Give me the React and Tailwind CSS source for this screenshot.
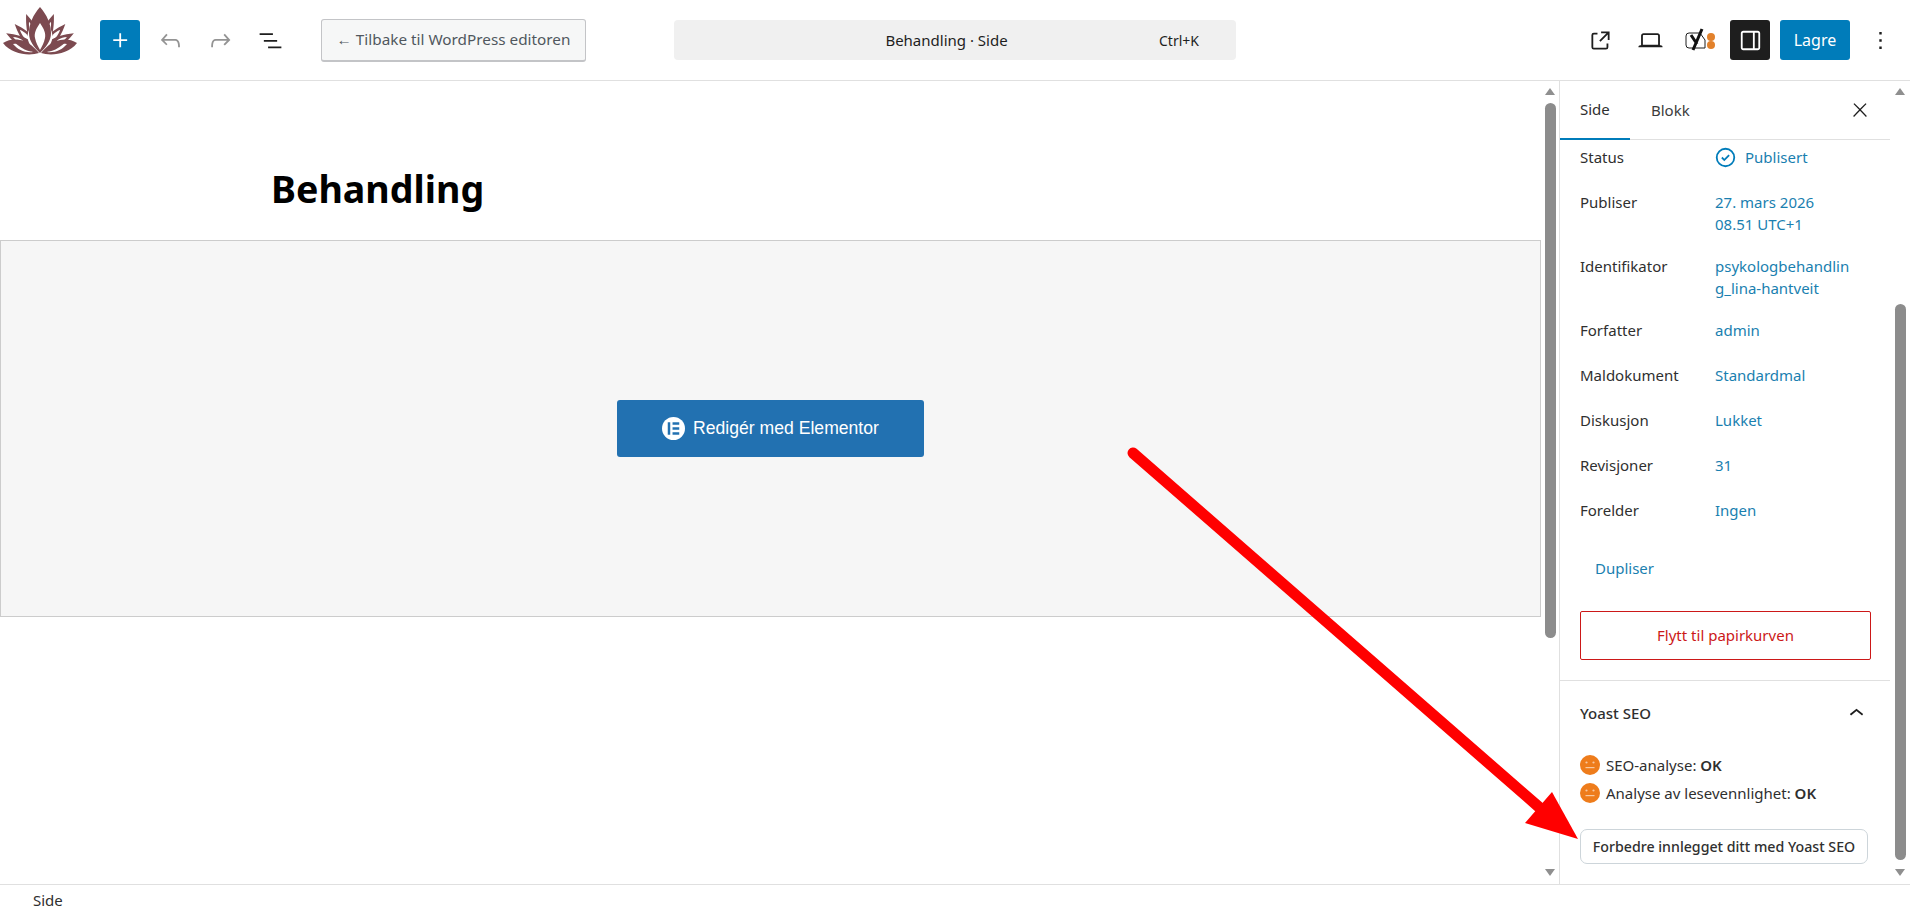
import React from "react";

const WpIcon = ({ d, className = "w-[29px] h-[29px]" }) => (
  <svg viewBox="0 0 24 24" className={`fill-current ${className}`}>
    <path d={d} fillRule="evenodd" />
  </svg>
);

const icons = {
  plus: "M11 12.5V17.5H12.5V12.5H17.5V11H12.5V6H11V11H6V12.5H11Z",
  undo: "M18.3 11.7c-.6-.6-1.4-.9-2.3-.9H6.7l2.9-3.3-1.1-1-4.5 5L8.5 16l1-1-2.7-2.7H16c.5 0 .9.2 1.3.5 1 1 1 3.4 1 4.5v.3h1.5v-.2c0-1.5 0-4.3-1.5-5.7z",
  redo: "M15.6 6.5l-1.1 1 2.9 3.3H8c-.9 0-1.7.3-2.3.9-1.4 1.5-1.4 4.2-1.4 5.6v.2h1.5v-.3c0-1.1 0-3.5 1-4.5.3-.3.7-.5 1.3-.5h9.2L14.5 15l1.1 1.1 4.6-4.6-4.6-5z",
  list: "M3 6h11v1.5H3V6Zm3.5 5.5h11V13h-11v-1.5ZM21 17H10v1.5h11V17Z",
  external: "M19.5 4.5h-7V6h4.44l-5.97 5.97 1.06 1.06L18 7.06v4.44h1.5v-7Zm-13 1a2 2 0 0 0-2 2v10a2 2 0 0 0 2 2h10a2 2 0 0 0 2-2v-3H17v3a.5.5 0 0 1-.5.5h-10a.5.5 0 0 1-.5-.5v-10a.5.5 0 0 1 .5-.5h3V5.5h-3Z",
  laptop: "M20.5 16h-.7V8c0-1.1-.9-2-2-2H6.2c-1.1 0-2 .9-2 2v8h-.7c-.8 0-1.5.7-1.5 1.5h20c0-.8-.7-1.5-1.5-1.5zM5.7 8c0-.3.2-.5.5-.5h11.6c.3 0 .5.2.5.5v7.6H5.7V8z",
  panel: "M18 4H6c-1.1 0-2 .9-2 2v12c0 1.1.9 2 2 2h12c1.1 0 2-.9 2-2V6c0-1.1-.9-2-2-2zm-4 14.5H6c-.3 0-.5-.2-.5-.5V6c0-.3.2-.5.5-.5h8v13zm4.5-.5c0 .3-.2.5-.5.5h-2.5v-13H18c.3 0 .5.2.5.5v12z",
  dots: "M13 19h-2v-2h2v2zm0-6h-2v-2h2v2zm0-6h-2V5h2v2z",
  close: "M13 11.8l6.1-6.3-1-1-6.1 6.2-6.1-6.2-1 1 6.1 6.3-6.5 6.7 1 1 6.5-6.6 6.5 6.6 1-1z",
  chevron: "M6.5 12.4L12 8l5.5 4.4-.9 1.2L12 10l-4.5 3.6-1-1.2z",
  published: "M12 18.5a6.5 6.5 0 1 1 0-13 6.5 6.5 0 0 1 0 13ZM4 12a8 8 0 1 1 16 0 8 8 0 0 1-16 0Zm11.53-1.47-1.06-1.06L11 12.94l-1.47-1.47-1.06 1.06L11 15.06l4.53-4.53Z",
};

function Petal({ angle, scale }) {
  return (
    <g transform={`rotate(${angle} 40 52) translate(40 52) scale(${scale}) translate(-40 -52)`}>
      <path
        fillRule="evenodd"
        d="M40 50 C33 42 31 30 40 8 C49 30 47 42 40 50Z M40 34 C37 29 37 24 40 17 C43 24 43 29 40 34Z"
      />
    </g>
  );
}

function Logo() {
  return (
    <svg viewBox="0 0 80 60" className="w-[80px] h-[60px] fill-[#7c4a50] shrink-0 self-start">
      <Petal angle={-61} scale={0.88} />
      <Petal angle={61} scale={0.88} />
      <Petal angle={-42} scale={0.86} />
      <Petal angle={42} scale={0.86} />
      <Petal angle={-20} scale={0.92} />
      <Petal angle={20} scale={0.92} />
      <path
        fill="#fff"
        d="M40 15 C50 24 54 34 52 40 C50 47 45 51 40 55 C35 51 30 47 28 40 C26 34 30 24 40 15Z"
      />
      <path
        fillRule="evenodd"
        d="M40 7 C47 15 51 24 51 33 C51 41 46 47 40 53 C34 47 29 41 29 33 C29 24 33 15 40 7Z M40 23 C36 29 34 33 35 38 C36 43 38 46 40 50 C42 46 44 43 45 38 C46 33 44 29 40 23Z"
      />
      <path
        fillRule="evenodd"
        d="M3 43 C12 37 24 39 31 45 C34 48 37 50 39 53 C30 56 12 55 3 43Z M13 44 C20 42 27 46 33 52 C25 53 18 50 13 44Z"
      />
      <path
        fillRule="evenodd"
        d="M77 43 C68 37 56 39 49 45 C46 48 43 50 41 53 C50 56 68 55 77 43Z M67 44 C60 42 53 46 47 52 C55 53 62 50 67 44Z"
      />
    </svg>
  );
}

function YoastIcon() {
  return (
    <svg viewBox="0 0 32 28" className="w-[32px] h-[28px]">
      <path d="M5 7 H16 L21 14 V22 H5 Q2 22 2 19 V10 Q2 7 5 7Z" fill="none" stroke="#1e1e1e" strokeWidth="1" />
      <path d="M7 9 L13 18 M18 3 L9 24" fill="none" stroke="#111" strokeWidth="3" />
      <circle cx="27" cy="11" r="4" fill="#e2812b" />
      <circle cx="27" cy="19" r="4" fill="#e2812b" />
    </svg>
  );
}

function Face() {
  return (
    <svg viewBox="0 0 20 20" className="w-[20px] h-[20px] shrink-0">
      <circle cx="10" cy="10" r="10" fill="#ee7c1b" />
      <circle cx="6.5" cy="7.5" r="1.1" fill="#f9c9a0" />
      <circle cx="13.5" cy="7.5" r="1.1" fill="#f9c9a0" />
      <rect x="5.5" y="12" width="9" height="1.2" fill="#f9c9a0" />
    </svg>
  );
}

function ElementorIcon() {
  return (
    <svg viewBox="0 0 24 24" className="w-[23px] h-[23px]">
      <circle cx="12" cy="12" r="12" fill="#fff" />
      <rect x="6" y="5.5" width="2.6" height="13" fill="#2271b1" />
      <rect x="11" y="5.5" width="7" height="2.6" fill="#2271b1" />
      <rect x="11" y="10.7" width="7" height="2.6" fill="#2271b1" />
      <rect x="11" y="15.9" width="7" height="2.6" fill="#2271b1" />
    </svg>
  );
}

function Scrollbar({ thumbTop, thumbHeight, className = "" }) {
  return (
    <div className={`flex flex-col items-center shrink-0 relative h-full ${className}`}>
      <svg viewBox="0 0 10 7" className="w-[10px] h-[7px] fill-[#8f8f8f] absolute top-[7px]">
        <path d="M5 0 L10 7 H0Z" />
      </svg>
      <div
        className="w-[11px] rounded-full bg-[#8c8c8c] absolute"
        style={{ top: thumbTop, height: thumbHeight }}
      />
      <svg viewBox="0 0 10 7" className="w-[10px] h-[7px] fill-[#8f8f8f] absolute bottom-[8px]">
        <path d="M5 7 L10 0 H0Z" />
      </svg>
    </div>
  );
}

const rows = [
  { label: "Status", value: ["Publisert"], status: true },
  { label: "Publiser", value: ["27. mars 2026", "08.51 UTC+1"] },
  { label: "Identifikator", value: ["psykologbehandlin", "g_lina-hantveit"] },
  { label: "Forfatter", value: ["admin"] },
  { label: "Maldokument", value: ["Standardmal"] },
  { label: "Diskusjon", value: ["Lukket"] },
  { label: "Revisjoner", value: ["31"] },
  { label: "Forelder", value: ["Ingen"] },
];

function Header() {
  return (
    <header className="h-[81px] shrink-0 flex items-center border-b border-[#e0e0e0] bg-white">
      <Logo />
      <button className="ml-[20px] w-[40px] h-[40px] rounded-[3px] bg-[#007cba] text-white flex items-center justify-center">
        <WpIcon d={icons.plus} />
      </button>
      <div className="ml-[10px] flex gap-[10px]">
        <div className="w-[40px] h-[40px] flex items-center justify-center text-[#949494]">
          <WpIcon d={icons.undo} />
        </div>
        <div className="w-[40px] h-[40px] flex items-center justify-center text-[#949494]">
          <WpIcon d={icons.redo} />
        </div>
        <div className="w-[40px] h-[40px] flex items-center justify-center text-[#1e1e1e]">
          <WpIcon d={icons.list} />
        </div>
      </div>
      <button className="ml-[31px] w-[265px] h-[43px] rounded-[3px] border border-[#c3c4c7] border-b-2 bg-[#f6f7f7] text-[#50575e] text-[15.3px] whitespace-nowrap">
        ← Tilbake til WordPress editoren
      </button>
      <div className="ml-[88px] w-[562px] h-[40px] rounded-[4px] bg-[#f0f0f0] flex items-center text-[#1e1e1e] pr-[37px]">
        <span className="flex-1 text-center pl-[60px] text-[15px]">Behandling · Side</span>
        <span className="text-[14px]">Ctrl+K</span>
      </div>
      <div className="ml-auto pr-[10px] flex items-center gap-[10px]">
        <div className="w-[40px] h-[40px] flex items-center justify-center text-[#1e1e1e]">
          <WpIcon d={icons.external} />
        </div>
        <div className="w-[40px] h-[40px] flex items-center justify-center text-[#1e1e1e]">
          <WpIcon d={icons.laptop} />
        </div>
        <div className="w-[40px] h-[40px] flex items-center justify-center">
          <YoastIcon />
        </div>
        <div className="w-[40px] h-[40px] rounded-[3px] bg-[#1e1e1e] text-white flex items-center justify-center">
          <WpIcon d={icons.panel} />
        </div>
        <button className="w-[70px] h-[40px] rounded-[3px] bg-[#007cba] text-white text-[16px]">Lagre</button>
        <div className="w-[40px] h-[40px] flex items-center justify-center text-[#1e1e1e]">
          <WpIcon d={icons.dots} />
        </div>
      </div>
    </header>
  );
}

function Sidebar() {
  return (
    <aside className="w-[331px] shrink-0 border-l border-[#e0e0e0] flex flex-col text-[15px] text-[#2f2f2f]">
      <div className="h-[59px] shrink-0 flex items-center border-b border-[#e0e0e0] relative">
        <div className="w-[70px] h-full flex items-center pl-[20px] border-b-2 border-[#007cba] -mb-px">Side</div>
        <div className="pl-[21px] text-[#3c3c3c]">Blokk</div>
        <div className="absolute right-[19px] top-[18px] text-[#1e1e1e]">
          <WpIcon d={icons.close} className="w-[22px] h-[22px]" />
        </div>
      </div>
      <div className="-mt-[4px] px-[20px]">
        {rows.map((row) => (
          <div key={row.label} className="flex min-h-[45px] py-[10px] leading-[22px]">
            <div className="w-[135px] shrink-0">{row.label}</div>
            <div className="text-[#1a7fb0]">
              {row.status ? (
                <div className="flex items-center -ml-[4px] h-[22px]">
                  <WpIcon d={icons.published} className="text-[#007cba] w-[29px] h-[29px]" />
                  <span className="ml-[5px]">{row.value[0]}</span>
                </div>
              ) : (
                row.value.map((line) => <div key={line}>{line}</div>)
              )}
            </div>
          </div>
        ))}
        <div className="mt-[23px] pl-[15px] text-[#1a7fb0] leading-[22px]">Dupliser</div>
        <button className="mt-[32px] w-[291px] h-[49px] rounded-[2px] border border-[#cc1818] text-[#cc1818] flex items-center justify-center">
          Flytt til papirkurven
        </button>
      </div>
      <div className="mt-[20px] border-t border-[#e0e0e0] px-[20px] pt-[21px]">
        <div className="flex items-center justify-between font-medium leading-[22px]">
          <span>Yoast SEO</span>
          <WpIcon d={icons.chevron} className="w-[29px] h-[29px] -mr-[1px] text-[#1e1e1e] -my-[4px]" />
        </div>
        <div className="mt-[30px] flex items-center gap-[6px] leading-[22px]">
          <Face />
          <span>
            SEO-analyse: <b className="font-semibold">OK</b>
          </span>
        </div>
        <div className="mt-[6px] flex items-center gap-[6px] leading-[22px]">
          <Face />
          <span>
            Analyse av lesevennlighet: <b className="font-semibold">OK</b>
          </span>
        </div>
        <button className="mt-[25px] w-[288px] h-[35px] rounded-[7px] border border-[#cdd5da] font-medium text-[14.2px] text-[#303030] whitespace-nowrap">
          Forbedre innlegget ditt med Yoast SEO
        </button>
      </div>
    </aside>
  );
}

export default function App() {
  return (
    <div className="relative w-[1910px] h-[915px] overflow-hidden bg-white flex flex-col font-['Noto_Sans',sans-serif]">
      <Header />
      <main className="flex-1 flex min-h-0">
        <div className="flex-1 min-w-0">
          <h1 className="pl-[271px] pt-[81px] text-[37.6px] leading-[54px] font-bold text-black">Behandling</h1>
          <div className="mt-[24px] h-[377px] bg-[#f6f6f6] border border-[#ccc] flex items-center justify-center">
            <button className="w-[307px] h-[57px] rounded-[3px] bg-[#2271b1] text-white text-[17.6px] font-['Liberation_Sans',sans-serif] flex items-center justify-center gap-[8px]">
              <ElementorIcon />
              Redigér med Elementor
            </button>
          </div>
        </div>
        <Scrollbar thumbTop={22} thumbHeight={535} className="w-[18px]" />
        <Sidebar />
        <Scrollbar thumbTop={223} thumbHeight={556} className="w-[20px]" />
      </main>
      <footer className="h-[31px] shrink-0 border-t border-[#e0e0e0] pl-[33px] flex items-center text-[15px] text-[#2f2f2f]">
        Side
      </footer>
      <svg viewBox="0 0 1910 915" className="absolute inset-0 w-[1910px] h-[915px] pointer-events-none">
        <line x1="1133" y1="453" x2="1540" y2="808" stroke="#ff0000" strokeWidth="11" strokeLinecap="round" />
        <polygon points="1552,792 1525,823 1578,839" fill="#ff0000" />
      </svg>
    </div>
  );
}
